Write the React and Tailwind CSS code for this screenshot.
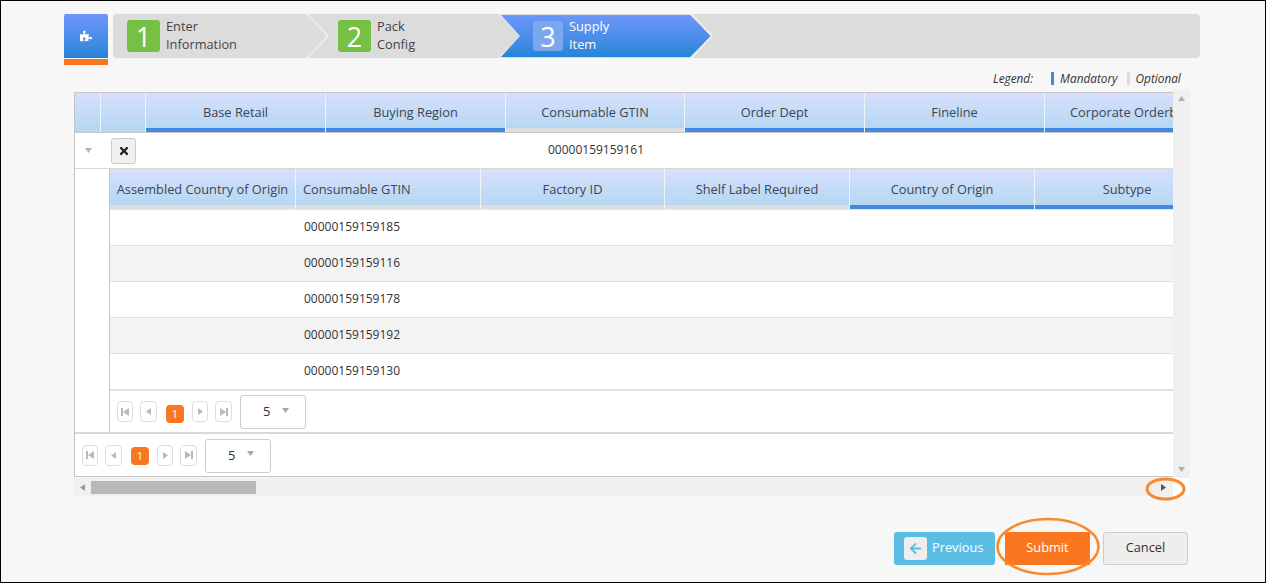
import React from "react";
import { FaPuzzlePiece, FaTimes, FaArrowLeft } from "react-icons/fa";

const font = { fontFamily: '"Open Sans", sans-serif' };

const TRI = {
  down: "0,0 7,0 3.5,5",
  up: "0,5 7,5 3.5,0",
  left: "5,0 5,7 0,3.5",
  right: "0,0 0,7 5,3.5",
};

function Tri({ dir, className = "" }) {
  const horizontal = dir === "left" || dir === "right";
  return (
    <svg className={className} width={horizontal ? 5 : 7} height={horizontal ? 7 : 5} viewBox={horizontal ? "0 0 5 7" : "0 0 7 5"}>
      <polygon points={TRI[dir]} fill="currentColor" />
    </svg>
  );
}

function Skip({ dir }) {
  return (
    <svg width="8" height="8" viewBox="0 0 8 8">
      {dir === "first" ? (
        <g fill="currentColor"><rect x="0" y="0" width="2" height="8" /><polygon points="8,0 8,8 2,4" /></g>
      ) : (
        <g fill="currentColor"><rect x="6" y="0" width="2" height="8" /><polygon points="0,0 0,8 6,4" /></g>
      )}
    </svg>
  );
}

function Chevron({ className = "right-0", w = 24 }) {
  return (
    <svg className={`absolute top-0 ${className}`} width={w} height="44" viewBox={`0 0 ${w} 44`}>
      <path d={`M1 0 L${w - 2} 22 L1 44`} fill="none" stroke="#ececec" strokeWidth="2" />
    </svg>
  );
}

function Step({ n, l1, l2, width, pl, chevronClass }) {
  return (
    <div className={`relative h-full flex items-center shrink-0 ${width} ${pl}`}>
      <div className="w-[33px] h-[32px] rounded-[3px] bg-[#76c043] text-white text-[27px] flex items-center justify-center leading-none">{n}</div>
      <div className="ml-[6px] -mt-[2px] text-[12.8px] leading-[18px] text-[#444]">
        <div>{l1}</div>
        <div>{l2}</div>
      </div>
      <Chevron className={chevronClass} />
    </div>
  );
}

function HeaderCell({ children, w, mark = "blue", align = "center", pl = "" }) {
  const markCls = mark === "blue" ? "bg-[#4289e6]" : mark === "gray" ? "bg-[#dddddd]" : "";
  return (
    <div className={`${w} shrink-0 h-full flex flex-col border-r border-r-[#eef4fc] bg-gradient-to-b from-[#d6e0fd] to-[#b2d6f1]`}>
      <div className={`flex-1 flex items-center ${align === "center" ? "justify-center" : "justify-start"} ${pl} pt-[5px] text-[12.8px] text-[#3d4650] whitespace-nowrap overflow-hidden`}>
        {children}
      </div>
      {mark !== "none" && <div className={`h-[4px] ${markCls}`} />}
    </div>
  );
}

function Pager({ orangeMt }) {
  const Btn = ({ children, cls = "w-[16px]" }) => (
    <div className={`${cls} h-[21px] rounded-[4px] border border-[#dddddd] flex items-center justify-center text-[#b9b9b9]`}>{children}</div>
  );
  return (
    <div className="flex items-center">
      <Btn><Skip dir="first" /></Btn>
      <div className="w-[7px]" />
      <Btn cls="w-[17px]"><Tri dir="left" /></Btn>
      <div className="w-[9px]" />
      <div className={`w-[18px] h-[18px] ${orangeMt} rounded-[4px] bg-[#f97720] text-white text-[11px] flex items-center justify-center`}>1</div>
      <div className="w-[8px]" />
      <Btn><Tri dir="right" /></Btn>
      <div className="w-[7px]" />
      <Btn cls="w-[17px]"><Skip dir="last" /></Btn>
      <div className="w-[8px]" />
      <div className="w-[66px] h-[34px] mt-[1px] rounded-[3px] border border-[#cccccc] bg-white flex items-center text-[13px] text-[#333]">
        <span className="ml-[22px]">5</span>
        <Tri dir="down" className="ml-[12px] -mt-[4px] text-[#aaaaaa]" />
      </div>
    </div>
  );
}

const rows = ["00000159159185", "00000159159116", "00000159159178", "00000159159192", "00000159159130"];

export default function App() {
  return (
    <div className="w-[1266px] h-[583px] border border-black bg-[#f7f7f7] overflow-hidden flex flex-col" style={font}>
      {/* wizard */}
      <div className="flex h-[51px] mt-[13px] ml-[63px] mr-[65px] shrink-0">
        <div className="w-[44px] h-[51px] flex flex-col shrink-0">
          <div className="h-[44px] rounded-t-[2px] bg-gradient-to-b from-[#6c96fb] to-[#2285d8] flex items-center justify-center text-white">
            <FaPuzzlePiece size={12} />
          </div>
          <div className="h-[1px]" />
          <div className="h-[6px] bg-[#f97720]" />
        </div>
        <div className="ml-[5px] flex-1 h-[44px] rounded-[4px] bg-[#dcdcdc] flex items-center">
          <Step n="1" l1="Enter" l2="Information" width="w-[215px]" pl="pl-[14px]" chevronClass="-right-[2px]" />
          <Step n="2" l1="Pack" l2="Config" width="w-[173px]" pl="pl-[10px]" chevronClass="-right-[22px]" />
          <div className="relative h-[44px] w-[212px] shrink-0 flex items-center">
            <div className="h-[42px] w-[212px] flex items-center pl-[32px] text-white bg-gradient-to-b from-[#6c96fb] to-[#2285d8] [clip-path:polygon(0_0,189px_0,211px_50%,189px_100%,0_100%,19px_50%)]">
              <div className="w-[30px] h-[30px] rounded-[3px] bg-[#7ba7ee] text-[27px] flex items-center justify-center leading-none">3</div>
              <div className="ml-[6px] -mt-[2px] text-[12.8px] leading-[18px]">
                <div>Supply</div>
                <div>Item</div>
              </div>
            </div>
            <Chevron className="-right-[1px]" />
          </div>
        </div>
      </div>

      {/* legend */}
      <div className="h-[21px] mt-[3px] ml-[992px] flex items-center text-[11.8px] italic text-[#333] shrink-0">
        <span className="font-medium">Legend:</span>
        <span className="ml-[18px] w-[3px] h-[13px] bg-[#4289e6]" />
        <span className="ml-[6px]">Mandatory</span>
        <span className="ml-[9px] w-[3px] h-[13px] bg-[#dddddd]" />
        <span className="ml-[6px]">Optional</span>
      </div>

      {/* grid + scrollbars */}
      <div className="ml-[73px] w-[1116px] shrink-0">
        <div className="flex h-[389px]">
          <div className="w-[1099px] pt-[3px] flex flex-col">
            <div className="h-[385px] overflow-hidden border-t border-b border-l border-[#c4c4c4] bg-white flex flex-col">
              {/* master header */}
              <div className="h-[40px] flex shrink-0 border-b border-[#c8c8c8]">
                <HeaderCell w="w-[26px]" mark="none"> </HeaderCell>
                <HeaderCell w="w-[45px]" mark="none"> </HeaderCell>
                <HeaderCell w="w-[180px]">Base Retail</HeaderCell>
                <HeaderCell w="w-[180px]">Buying Region</HeaderCell>
                <HeaderCell w="w-[179px]" mark="gray">Consumable GTIN</HeaderCell>
                <HeaderCell w="w-[180px]">Order Dept</HeaderCell>
                <HeaderCell w="w-[180px]">Fineline</HeaderCell>
                <HeaderCell w="w-[180px]" align="left" pl="pl-[25px]">Corporate Orderbook</HeaderCell>
              </div>
              {/* master row */}
              <div className="h-[36px] flex items-center shrink-0 border-b border-[#d8d8d8]">
                <div className="w-[27px] flex justify-center text-[#b5b5b5]"><Tri dir="down" /></div>
                <div className="ml-[9px] w-[25px] h-[26px] rounded-[3px] border border-[#cccccc] bg-[#f0f0f0] flex items-center justify-center text-[#222] text-[12px]"><FaTimes /></div>
                <div className="ml-[369px] w-[180px] pl-[2px] pb-[2px] text-center text-[12px] text-[#333]">00000159159161</div>
              </div>
              {/* detail */}
              <div className="flex-1 flex min-h-0">
                <div className="w-[35px] shrink-0 bg-white border-r border-[#c8c8c8]" />
                <div className="flex-1 min-w-0 flex flex-col">
                  <div className="h-[40px] flex shrink-0">
                    <HeaderCell w="w-[186px]" mark="gray">Assembled Country of Origin</HeaderCell>
                    <HeaderCell w="w-[185px]" mark="gray" align="left" pl="pl-[7px]">Consumable GTIN</HeaderCell>
                    <HeaderCell w="w-[184px]" mark="gray">Factory ID</HeaderCell>
                    <HeaderCell w="w-[185px]" mark="gray">Shelf Label Required</HeaderCell>
                    <HeaderCell w="w-[185px]">Country of Origin</HeaderCell>
                    <HeaderCell w="w-[185px]">Subtype</HeaderCell>
                  </div>
                  <div className="h-px bg-[#e4e4e4] shrink-0" />
                  {rows.map((r, i) => (
                    <div key={r} className={`h-[36px] shrink-0 flex items-center border-b border-[#e2e2e2] pl-[194px] pb-[2px] text-[12px] text-[#333] ${i % 2 ? "bg-[#f3f3f3]" : "bg-white"}`}>
                      {r}
                    </div>
                  ))}
                  <div className="h-[42px] shrink-0 flex items-center pl-[7px] border-t border-[#e2e2e2]">
                    <Pager orangeMt="mt-[5px]" />
                  </div>
                </div>
              </div>
              {/* outer pager */}
              <div className="h-[44px] shrink-0 flex items-center pl-[7px] border-t-2 border-[#d8d8d8]">
                <Pager orangeMt="mt-[2px]" />
              </div>
            </div>
          </div>
          {/* vertical scrollbar */}
          <div className="w-[17px] bg-[#f0f0f0] flex flex-col items-center justify-between pt-[7px] pb-[6px] text-[#b0b0b0]">
            <Tri dir="up" />
            <Tri dir="down" />
          </div>
        </div>
        {/* horizontal scrollbar */}
        <div className="flex h-[18px]">
          <div className="w-[1099px] bg-[#f0f0f0] flex items-center text-[#9a9a9a]">
            <div className="w-[17px] flex justify-center"><Tri dir="left" /></div>
            <div className="w-[165px] h-[13px] bg-[#b8b8b8]" />
            <div className="flex-1" />
            <div className="w-[17px] flex justify-center text-[#555555] translate-x-[-1px]"><Tri dir="right" /></div>
          </div>
          <div className="w-[17px] bg-white" />
        </div>
      </div>

      {/* buttons */}
      <div className="mt-[36px] ml-[893px] flex items-center text-[12.8px] shrink-0">
        <div className="w-[101px] h-[33px] rounded-[3px] bg-[#5bbde4] flex items-center pl-[10px] text-white">
          <div className="w-[23px] h-[23px] rounded-[3px] bg-[#eeeeee] flex items-center justify-center text-[#5bbde4] text-[13px]"><FaArrowLeft /></div>
          <span className="ml-[5px] pb-[2px]">Previous</span>
        </div>
        <div className="ml-[10px] w-[85px] h-[33px] pb-[2px] bg-[#f97720] text-white flex items-center justify-center">Submit</div>
        <div className="ml-[13px] w-[85px] h-[33px] pb-[2px] rounded-[3px] bg-[#eeeeee] border border-[#cccccc] text-[#333] flex items-center justify-center">Cancel</div>
      </div>

      {/* hand-drawn annotations */}
      <svg className="absolute top-0 left-0 pointer-events-none" width="1267" height="583">
        <ellipse cx="1048" cy="546.5" rx="50.5" ry="27.5" fill="none" stroke="#f98a2c" strokeWidth="2.5" />
        <ellipse cx="1165.5" cy="489" rx="18.5" ry="10" fill="none" stroke="#f98a2c" strokeWidth="3" />
      </svg>
    </div>
  );
}
